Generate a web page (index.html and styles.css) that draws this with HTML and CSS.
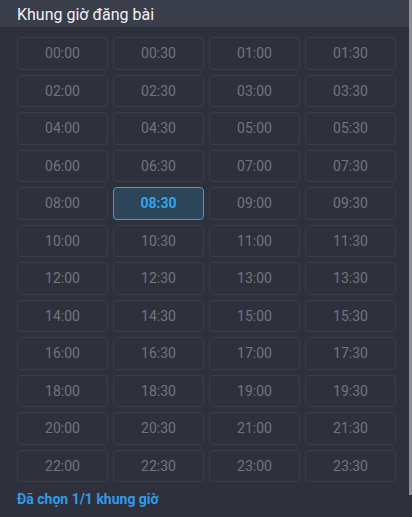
FILE: index.html
```html
<!DOCTYPE html>
<html lang="vi">
<head>
<meta charset="utf-8">
<link rel="stylesheet" href="styles.css">
</head>
<body>
<div class="panel">
  <div class="header">Khung giờ đăng bài</div>
  <div class="grid">
    <div class="slot">00:00</div><div class="slot">00:30</div><div class="slot">01:00</div><div class="slot">01:30</div>
    <div class="slot">02:00</div><div class="slot">02:30</div><div class="slot">03:00</div><div class="slot">03:30</div>
    <div class="slot">04:00</div><div class="slot">04:30</div><div class="slot">05:00</div><div class="slot">05:30</div>
    <div class="slot">06:00</div><div class="slot">06:30</div><div class="slot">07:00</div><div class="slot">07:30</div>
    <div class="slot">08:00</div><div class="slot selected">08:30</div><div class="slot">09:00</div><div class="slot">09:30</div>
    <div class="slot">10:00</div><div class="slot">10:30</div><div class="slot">11:00</div><div class="slot">11:30</div>
    <div class="slot">12:00</div><div class="slot">12:30</div><div class="slot">13:00</div><div class="slot">13:30</div>
    <div class="slot">14:00</div><div class="slot">14:30</div><div class="slot">15:00</div><div class="slot">15:30</div>
    <div class="slot">16:00</div><div class="slot">16:30</div><div class="slot">17:00</div><div class="slot">17:30</div>
    <div class="slot">18:00</div><div class="slot">18:30</div><div class="slot">19:00</div><div class="slot">19:30</div>
    <div class="slot">20:00</div><div class="slot">20:30</div><div class="slot">21:00</div><div class="slot">21:30</div>
    <div class="slot">22:00</div><div class="slot">22:30</div><div class="slot">23:00</div><div class="slot">23:30</div>
  </div>
  <div class="footer">Đã chọn 1/1 khung giờ</div>
  <div class="scrollbar"></div>
</div>
</body>
</html>
```
FILE: styles.css
```css
html, body {
  margin: 0;
  padding: 0;
  background: #2e313b;
  font-family: Roboto, "Noto Sans", sans-serif;
}
.panel {
  position: relative;
  width: 412px;
  height: 517px;
  background: #2e313b;
  overflow: hidden;
}
.header {
  height: 27px;
  box-sizing: border-box;
  padding: 5px 0 0 17px;
  background: #3a3e4b;
  color: #f1f2f4;
  font-size: 16px;
  line-height: 20px;
}
.grid {
  display: grid;
  grid-template-columns: repeat(4, 91px);
  grid-auto-rows: 32.5px;
  column-gap: 5px;
  row-gap: 5px;
  padding: 10px 0 0 17px;
}
.slot {
  box-sizing: border-box;
  border: 1px solid #3a3e49;
  border-radius: 4px;
  display: flex;
  align-items: center;
  justify-content: center;
  color: #707581;
  font-size: 14px;
}
.slot.selected {
  background: #2d4558;
  border-color: #3b9ce4;
  color: #35a2f2;
  font-weight: bold;
}
.footer {
  padding: 8px 0 0 17px;
  color: #2f9bea;
  font-size: 14px;
  font-weight: bold;
  line-height: 18px;
}
.scrollbar {
  position: absolute;
  top: 0;
  right: 0;
  width: 3px;
  height: 495px;
  background: #8d9098;
}
```
